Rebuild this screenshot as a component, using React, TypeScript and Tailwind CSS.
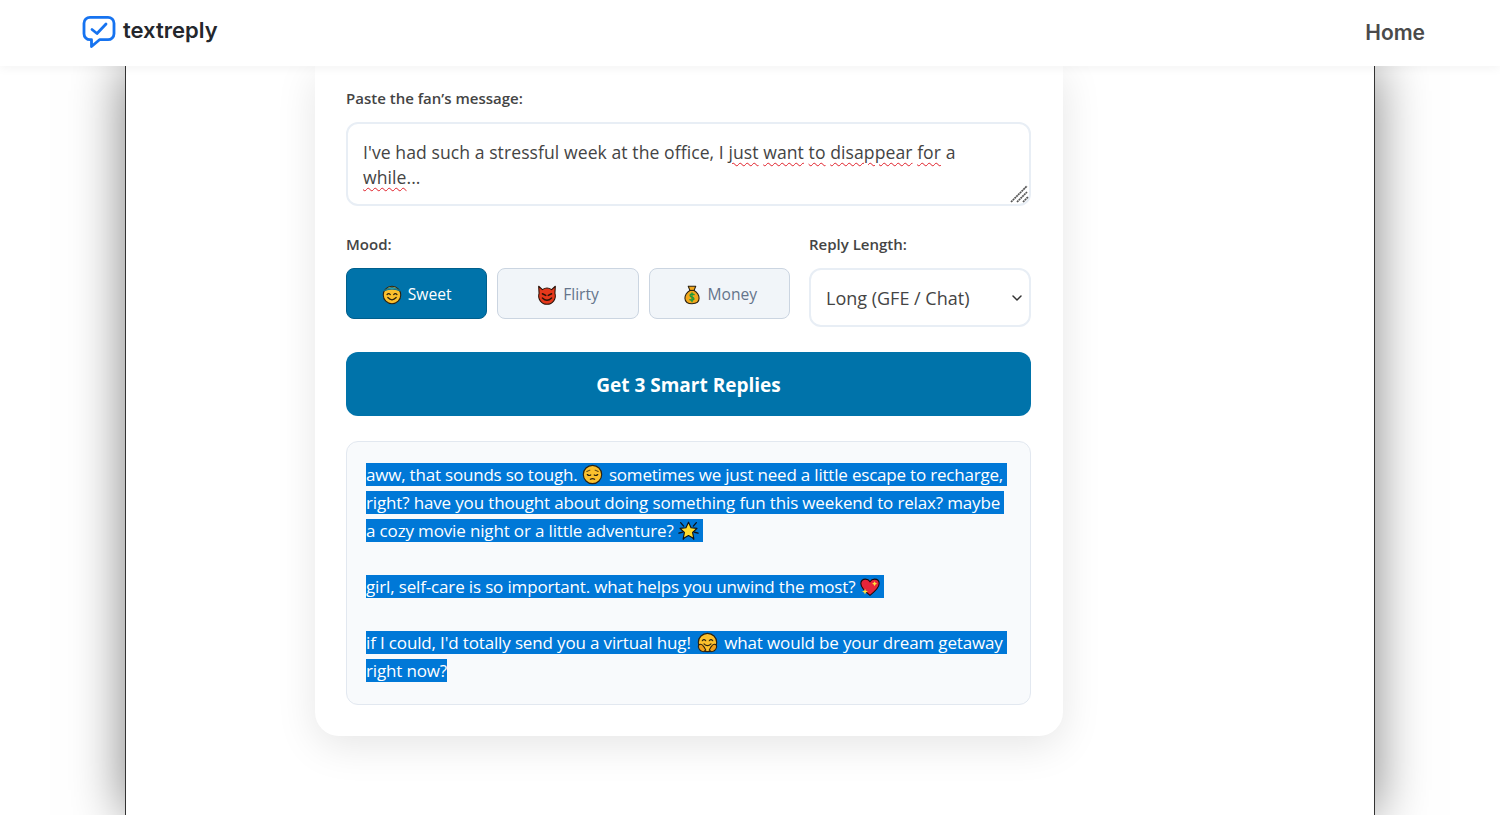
import { ChevronDown } from 'lucide-react';

const SQUIGGLE = 'underline decoration-wavy decoration-[#e0202a] decoration-1 underline-offset-[3px]';

function Logo() {
  return (
    <svg width="36" height="36" viewBox="0 0 36 36" fill="none">
      <path
        d="M9 3.3h18a6 6 0 0 1 6 6v10.4a6 6 0 0 1-6 6H18.500L10.500 32.500V25.700H9a6 6 0 0 1-6-6V9.300a6 6 0 0 1 6-6z"
        stroke="#1673f0"
        strokeWidth="2.8"
        strokeLinejoin="round"
      />
      <path d="M11 15.500l5 4 9-9.500" stroke="#1673f0" strokeWidth="2.800" strokeLinecap="round" strokeLinejoin="round" />
    </svg>
  );
}

// the page shows Windows emoji, so they are drawn by hand
function Face({ size, children, className = '' }: { size: number; children: React.ReactNode; className?: string }) {
  return (
    <svg width={size} height={size} viewBox="0 0 24 24" className={`inline-block align-[-4px] ${className}`}>
      <circle cx="12" cy="12" r="10.500" fill="#fbc02d" stroke="#2b2110" strokeWidth="1.300" />
      {children}
    </svg>
  );
}

function Halo() {
  return (
    <Face size={20}>
      <path d="M2.500 7Q12 -1 21.500 7Q12 3 2.500 7z" fill="#35b5c9" stroke="#1a6f80" strokeWidth="1.200" />
      <path d="M6 11.500q2-2.500 4 0M14 11.500q2-2.500 4 0" fill="none" stroke="#2b2110" strokeWidth="1.400" strokeLinecap="round" />
      <path d="M7 15q5 5.500 10 0" fill="none" stroke="#2b2110" strokeWidth="1.500" strokeLinecap="round" />
    </Face>
  );
}

function Imp() {
  return (
    <svg width="20" height="20" viewBox="0 0 24 24" className="inline-block align-[-4px]">
      <path d="M2 1.500L6.500 5.500a10 10 0 0 1 11 0L22 1.500 21.500 10A10 10 0 1 1 2.500 10z" fill="#e5381b" stroke="#2b1208" strokeWidth="1.300" strokeLinejoin="round" />
      <path d="M6.500 10.500l4 2M17.500 10.500l-4 2" stroke="#2b1208" strokeWidth="1.800" strokeLinecap="round" />
      <path d="M6.500 15.500q5.500 5.500 11 0" fill="none" stroke="#2b1208" strokeWidth="1.700" strokeLinecap="round" />
    </svg>
  );
}

function MoneyBag() {
  return (
    <svg width="20" height="20" viewBox="0 0 24 24" className="inline-block align-[-4px]">
      <path d="M7.500 1.500h9l-2 5c4 2.500 6 6 6 9.500 0 4.500-3.500 6.500-8.500 6.500s-8.500-2-8.500-6.500c0-3.500 2-7 6-9.500z" fill="#f2a81d" stroke="#2b2110" strokeWidth="1.300" strokeLinejoin="round" />
      <path d="M9 6.500h6" stroke="#2b2110" strokeWidth="1.300" />
      <path d="M14.500 11.500q-2.500-1.500-4.500 0-1 2 2 3t2 3q-2 1.500-4.500 0M12 9.500v10.500" fill="none" stroke="#1c9a3a" strokeWidth="1.600" strokeLinecap="round" />
    </svg>
  );
}

function Pensive() {
  return (
    <Face size={21} className="mr-[2px]">
      <path d="M5.500 8.500l3.500-1.500M18.500 8.500L15 7" stroke="#5c4315" strokeWidth="1.200" strokeLinecap="round" />
      <path d="M6 12q2 2 4 .500M14 12.500q2 1.500 4-.500" fill="none" stroke="#2b2110" strokeWidth="1.300" strokeLinecap="round" />
      <path d="M9.500 17.500q2.500-1.500 5 0" fill="none" stroke="#2b2110" strokeWidth="1.300" strokeLinecap="round" />
    </Face>
  );
}

function Star() {
  return (
    <svg width="21" height="21" viewBox="0 0 24 24" className="inline-block align-[-4px]">
      <path d="M3 3l3.500 4M21 3l-3.500 4M1 15l4-1M23 15l-4-1M6 22l2-3.500M18 22l-2-3.500" stroke="#111" strokeWidth="1.500" strokeLinecap="round" />
      <path d="M12 2.500l2.900 6.300 6.800.800-5 4.700 1.300 6.800-6-3.400-6 3.400 1.300-6.800-5-4.700 6.800-.800z" fill="#ffdc2e" stroke="#111" strokeWidth="1.300" strokeLinejoin="round" />
    </svg>
  );
}

function SparkHeart() {
  return (
    <svg width="20" height="20" viewBox="0 0 24 24" className="inline-block align-[-4px]">
      <path d="M12 22C5 16.500 1 12.500 1 7.800 1 4.500 3.500 2.500 6.500 2.500c2.300 0 4.300 1.200 5.500 3.200 1.200-2 3.200-3.200 5.500-3.200 3 0 5.500 2 5.500 5.300 0 4.700-4 8.700-11 14.200z" fill="#e5253a" stroke="#1c0a0a" strokeWidth="1.300" />
      <path d="M17.500 5l1 2 2 1-2 1-1 2-1-2-2-1 2-1zM6 14l1 2.500 2.500 1-2.500 1-1 2.500-1-2.500-2.500-1 2.500-1z" fill="#ffe23d" />
    </svg>
  );
}

function Hug() {
  return (
    <Face size={21} className="mx-[2px]">
      <path d="M6 10q2-2.500 4 0M14 10q2-2.500 4 0" fill="none" stroke="#2b2110" strokeWidth="1.300" strokeLinecap="round" />
      <path d="M8 13.500q4 4 8 0" fill="none" stroke="#2b2110" strokeWidth="1.300" strokeLinecap="round" />
      <path d="M1.500 17q0-3 2.500-3 2 0 4 3l2 3.500-2 2q-5 0-6.500-5.500zM22.500 17q0-3-2.500-3-2 0-4 3l-2 3.500 2 2q5 0 6.500-5.500z" fill="#f0a01c" stroke="#2b2110" strokeWidth="1.200" strokeLinejoin="round" />
    </Face>
  );
}

function MoodButton({ icon, label, active }: { icon: React.ReactNode; label: string; active?: boolean }) {
  return (
    <button
      type="button"
      className={
        active
          ? 'flex h-[51px] flex-1 items-center justify-center gap-[6px] rounded-lg border border-[#005f8c] bg-[#0073aa] pt-[2px] text-[15.6px] text-white'
          : 'flex h-[51px] flex-1 items-center justify-center gap-[6px] rounded-lg border border-[#cbd5e1] bg-[#f1f5f9] pt-[2px] text-[15.6px] text-[#64748b]'
      }
    >
      {icon}
      {label}
    </button>
  );
}

export default function App() {
  return (
    <div className="h-[815px] overflow-hidden bg-white font-['Open_Sans',sans-serif]">
      <header className="relative z-10 flex h-[66px] items-center justify-between bg-white pl-[81px] pr-[75px] shadow-[0_2px_10px_rgba(0,0,0,0.05)]">
        <div className="-mt-[3px] flex items-center gap-[6px]">
          <Logo />
          <span className="-mt-[2px] font-['Inter',sans-serif] text-[22px] font-semibold text-[#24272c]">textreply</span>
        </div>
        <a className="font-['Inter',sans-serif] text-[21px] font-semibold text-[#4a4a4a]">Home</a>
      </header>

      <div className="mx-auto h-[749px] w-[1250px] border-x border-[#333] bg-white pl-[189px] shadow-[0_0_50px_rgba(0,0,0,0.5)]">
        <main className="w-[748px] rounded-b-3xl bg-white pb-[31px] pl-[31px] pr-[32px] pt-[22px] shadow-[0_10px_40px_rgba(0,0,0,0.1)]">
          <label className="block text-[15px] font-semibold leading-5 text-[#444]">Paste the fan’s message:</label>

          <div className="relative mt-[14px] h-[84px] rounded-xl border-2 border-[#e8eef5] bg-white pl-[15px] pr-[40px] pt-[16px] text-[17.6px] leading-[25px] tracking-[0.06px] text-[#444]">
            I've had such a stressful week at the office, I <span className={SQUIGGLE}>just</span>{' '}
            <span className={SQUIGGLE}>want</span> <span className={SQUIGGLE}>to</span>{' '}
            <span className={SQUIGGLE}>disappear</span> <span className={SQUIGGLE}>for</span> a <span className={SQUIGGLE}>while</span>...
            <svg width="20" height="20" viewBox="0 0 20 20" className="absolute bottom-[1px] right-0">
              <path d="M2 19L18 3M8 19L18 9M14 19l5-5" stroke="#555" strokeWidth="1.700" strokeDasharray="2 0.500" />
            </svg>
          </div>

          <div className="mt-[28px] flex gap-[19px]">
            <div className="flex-1">
              <label className="block text-[15px] font-semibold leading-5 text-[#444]">Mood:</label>
              <div className="mt-[14px] flex gap-[10px]">
                <MoodButton icon={<Halo />} label="Sweet" active />
                <MoodButton icon={<Imp />} label="Flirty" />
                <MoodButton icon={<MoneyBag />} label="Money" />
              </div>
            </div>
            <div className="w-[222px]">
              <label className="block text-[15px] font-semibold leading-5 text-[#444]">Reply Length:</label>
              <div className="relative mt-[14px]">
                <select
                  defaultValue="long"
                  className="h-[59px] w-full appearance-none rounded-xl border-2 border-[#e8eef5] bg-white pl-[15px] pt-[2px] text-[18px] text-[#444] outline-none"
                >
                  <option value="long">Long (GFE / Chat)</option>
                </select>
                <ChevronDown size={16} strokeWidth={2.200} className="pointer-events-none absolute right-[6px] top-[22px] text-[#333]" />
              </div>
            </div>
          </div>

          <button type="button" className="mt-[25px] block h-[64px] w-full rounded-xl bg-[#0073aa] pt-[2px] text-[19px] font-bold text-white">
            Get 3 Smart Replies
          </button>

          <div className="mt-[25px] whitespace-nowrap rounded-xl border border-[#e2e8f0] bg-[#f8fafc] px-[19px] py-[19px] text-[17px] leading-[28px] tracking-[-0.15px] text-white">
            <span className="bg-[#0078d7] tracking-[-0.2px]">aww, that sounds so tough. <Pensive /> sometimes we just need a little escape to recharge,&nbsp;</span>
            <br />
            <span className="bg-[#0078d7]">right? have you thought about doing something fun this weekend to relax? maybe&nbsp;</span>
            <br />
            <span className="bg-[#0078d7]">a cozy movie night or a little adventure? <Star />&nbsp;</span>
            <br />
            <br />
            <span className="bg-[#0078d7]">girl, self-care is so important. what helps you unwind the most? <SparkHeart />&nbsp;</span>
            <br />
            <br />
            <span className="bg-[#0078d7]">if I could, I'd totally send you a virtual hug! <Hug /> what would be your dream getaway&nbsp;</span>
            <br />
            <span className="bg-[#0078d7]">right now?</span>
          </div>
        </main>
      </div>
    </div>
  );
}
